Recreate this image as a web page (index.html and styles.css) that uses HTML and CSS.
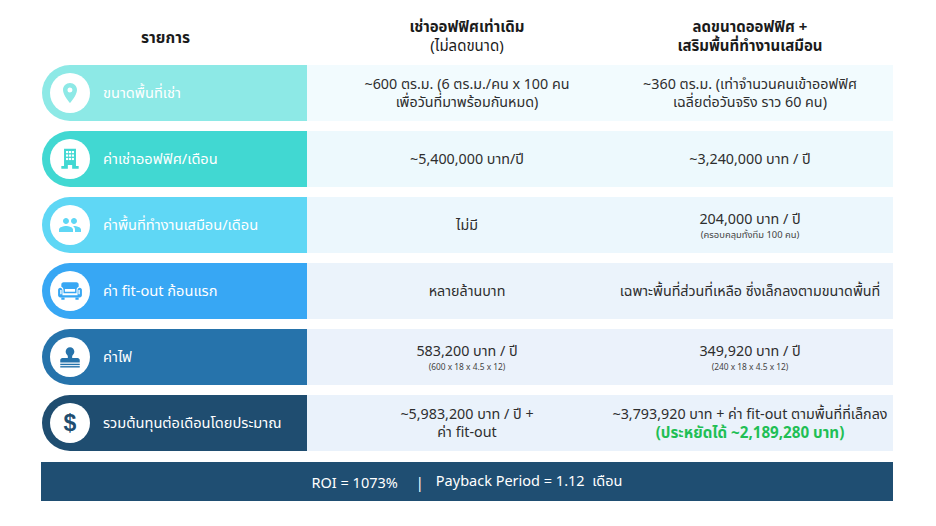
FILE: index.html
```html
<!DOCTYPE html>
<html lang="th">
<head>
<meta charset="utf-8">
<title>เปรียบเทียบต้นทุนออฟฟิศ</title>
<link rel="stylesheet" href="styles.css">
</head>
<body>
<div class="page">
  <div class="head">
    <div class="h-label">รายการ</div>
    <div class="h-col"><b>เช่าออฟฟิศเท่าเดิม</b><span>(ไม่ลดขนาด)</span></div>
    <div class="h-col h-col2"><b>ลดขนาดออฟฟิศ +</b><b>เสริมพื้นที่ทำงานเสมือน</b></div>
  </div>

  <div class="rows">
    <div class="row r1">
      <div class="label">
        <span class="ico"><svg viewBox="0 0 24 24" width="24" height="24"><path d="M12 2C8.13 2 5 5.13 5 9c0 5.25 7 13 7 13s7-7.750 7-13c0-3.87-3.13-7-7-7zm0 9.5a2.5 2.5 0 1 1 0-5 2.5 2.5 0 0 1 0 5z"/></svg></span>
        <span class="ltext">ขนาดพื้นที่เช่า</span>
      </div>
      <div class="cell c1"><span>~600 ตร.ม. (6 ตร.ม./คน x 100 คน</span><span>เพื่อวันที่มาพร้อมกันหมด)</span></div>
      <div class="cell c2"><span>~360 ตร.ม. (เท่าจำนวนคนเข้าออฟฟิศ</span><span>เฉลี่ยต่อวันจริง ราว 60 คน)</span></div>
    </div>

    <div class="row r2">
      <div class="label">
        <span class="ico"><svg viewBox="0 0 24 24" width="26" height="26"><path d="M6.5 2.5h11v16h2.5v2.5h-6v-3.5h-4V21H4v-2.5h2.5z" /><g fill="#fff"><rect x="8.3" y="4.6" width="2" height="2"/><rect x="11" y="4.6" width="2" height="2"/><rect x="13.7" y="4.6" width="2" height="2"/><rect x="8.3" y="7.8" width="2" height="2"/><rect x="11" y="7.8" width="2" height="2"/><rect x="13.7" y="7.8" width="2" height="2"/><rect x="8.3" y="11" width="2" height="2"/><rect x="11" y="11" width="2" height="2"/><rect x="13.7" y="11" width="2" height="2"/></g></svg></span>
        <span class="ltext">ค่าเช่าออฟฟิศ/เดือน</span>
      </div>
      <div class="cell c1"><span>~5,400,000 บาท/ปี</span></div>
      <div class="cell c2"><span>~3,240,000 บาท / ปี</span></div>
    </div>

    <div class="row r3">
      <div class="label">
        <span class="ico"><svg viewBox="0 0 24 24" width="24" height="24"><path d="M16 11c1.66 0 2.99-1.34 2.99-3S17.66 5 16 5c-1.66 0-3 1.34-3 3s1.34 3 3 3zm-8 0c1.66 0 2.99-1.34 2.99-3S9.66 5 8 5C6.34 5 5 6.34 5 8s1.34 3 3 3zm0 2c-2.33 0-7 1.17-7 3.5V19h14v-2.5c0-2.33-4.67-3.5-7-3.5zm8 0c-.29 0-.62.02-.97.05 1.16.84 1.97 1.97 1.97 3.45V19h6v-2.5c0-2.33-4.67-3.5-7-3.5z"/></svg></span>
        <span class="ltext">ค่าพื้นที่ทำงานเสมือน/เดือน</span>
      </div>
      <div class="cell c1"><span>ไม่มี</span></div>
      <div class="cell c2"><span>204,000 บาท / ปี</span><small class="th">(ครอบคลุมทั้งทีม 100 คน)</small></div>
    </div>

    <div class="row r4">
      <div class="label">
        <span class="ico"><svg viewBox="0 0 24 24" width="26" height="26"><path d="M21 9c-1.1 0-2 .9-2 2v5H5v-5c0-1.1-.9-2-2-2s-2 .9-2 2v5c0 1.1.9 2 2 2h18c1.1 0 2-.9 2-2v-5c0-1.1-.9-2-2-2zm-3-5H6c-1.1 0-2 .9-2 2v2.15c1.16.41 2 1.51 2 2.82V14h12v-3.03c0-1.3.84-2.4 2-2.820V6c0-1.1-.9-2-2-2z"/><path d="M4 18h3v2H4zm13 0h3v2h-3z"/><path fill="#fff" d="M7.3 10.2h9.4v2.4H7.3z M3 11h1.2v4H3z M19.8 11H21v4h-1.2z"/></svg></span>
        <span class="ltext">ค่า fit-out ก้อนแรก</span>
      </div>
      <div class="cell c1"><span>หลายล้านบาท</span></div>
      <div class="cell c2"><span>เฉพาะพื้นที่ส่วนที่เหลือ ซึ่งเล็กลงตามขนาดพื้นที่</span></div>
    </div>

    <div class="row r5">
      <div class="label">
        <span class="ico"><svg viewBox="0 0 24 24" width="26" height="26"><path d="M12 3a4 4 0 0 0-4 4c0 1.6.9 2.6 1.6 3.4.4.5.4 1 .4 1.6v1H5c-1.1 0-2 .9-2 2v2h18v-2c0-1.1-.9-2-2-2h-5v-1c0-.6 0-1.1.4-1.6.7-.8 1.6-1.8 1.6-3.4a4 4 0 0 0-4-4z"/><rect x="3" y="18.2" width="18" height="1.3"/><rect x="3" y="20.4" width="18" height="1.3"/></svg></span>
        <span class="ltext">ค่าไฟ</span>
      </div>
      <div class="cell c1"><span>583,200 บาท / ปี</span><small>(600 x 18 x 4.5 x 12)</small></div>
      <div class="cell c2"><span>349,920 บาท / ปี</span><small>(240 x 18 x 4.5 x 12)</small></div>
    </div>

    <div class="row r6">
      <div class="label">
        <span class="ico dollar">$</span>
        <span class="ltext">รวมต้นทุนต่อเดือนโดยประมาณ</span>
      </div>
      <div class="cell c1"><span>~5,983,200 บาท / ปี +</span><span>ค่า fit-out</span></div>
      <div class="cell c2"><span>~3,793,920 บาท + ค่า fit-out ตามพื้นที่ที่เล็กลง</span><b class="save">(ประหยัดได้ ~2,189,280 บาท)</b></div>
    </div>
  </div>

  <div class="roi">ROI = 1073%<span class="sep">|</span>Payback Period = 1.12&nbsp; เดือน</div>
</div>
</body>
</html>
```

FILE: styles.css
```css
* { box-sizing: border-box; }
html, body { margin: 0; padding: 0; background: #ffffff; }
body {
  font-family: "Noto Sans", "Noto Sans Thai", "Noto Sans Thai UI", sans-serif;
  color: #2a2a2a;
  width: 936px;
  height: 526px;
  overflow: hidden;
}
.page { padding: 17px 43px 0 42px; }

.head {
  display: grid;
  grid-template-columns: 265px 320px minmax(0, 1fr);
  height: 48px;
  align-items: start;
  color: #1b1b1b;
  font-size: 15px;
  line-height: 19px;
}
.h-label { font-weight: 700; text-align: center; padding: 11px 18px 0 0; font-size: 15.5px; }
.h-col { display: flex; flex-direction: column; align-items: center; white-space: nowrap; }
.h-col b { font-weight: 700; }
.h-col2 { padding-right: 20px; }

.rows { display: flex; flex-direction: column; gap: 10px; }
.row {
  display: grid;
  grid-template-columns: 265px 320px minmax(0, 1fr);
  height: 56px;
}
.label {
  display: flex;
  align-items: center;
  gap: 13px;
  padding-left: 8px;
  border-radius: 28px 0 0 28px;
  color: #ffffff;
  font-size: 14.6px;
  white-space: nowrap;
}
.ico {
  width: 40px; height: 40px;
  border-radius: 50%;
  background: #ffffff;
  display: flex; align-items: center; justify-content: center;
  flex: none;
}
.ico svg { fill: currentColor; }
.dollar { font-size: 23px; font-weight: 700; font-family: "Liberation Sans", sans-serif; }

.cell {
  display: flex;
  flex-direction: column;
  align-items: center;
  justify-content: center;
  font-size: 14.3px;
  line-height: 18px;
  white-space: nowrap;
  color: #2e2e2e;
  min-width: 0;
}
.c2 { padding-right: 20px; }
.cell small { font-size: 8.4px; line-height: 13px; color: #444; }
.cell small.th { font-size: 9.4px; }
.save { color: #1fbf55; font-weight: 700; font-size: 15.2px; line-height: 19px; }

.r1 .label { background: #8de9e6; } .r1 .ico { color: #8de9e6; } .r1 .cell { background: #f2fbfe; }
.r2 .label { background: #41d8d2; } .r2 .ico { color: #41d8d2; } .r2 .cell { background: #edf9fd; }
.r3 .label { background: #5fd7f5; } .r3 .ico { color: #5fd7f5; } .r3 .cell { background: #ecf7fd; }
.r4 .label { background: #37a7f4; } .r4 .ico { color: #37a7f4; } .r4 .cell { background: #ebf3fb; }
.r5 .label { background: #2673ab; } .r5 .ico { color: #2673ab; } .r5 .cell { background: #ebf2fb; }
.r6 .label { background: #1f4d70; } .r6 .ico { color: #1f4d70; } .r6 .cell { background: #eaf2fb; }

.roi {
  margin: 11px 0 0 -1px;
  height: 39px;
  background: #1f4e72;
  color: #ffffff;
  display: flex;
  align-items: center;
  justify-content: center;
  font-size: 14.5px;
}
.sep { margin: 0 12px 0 18px; }
```
